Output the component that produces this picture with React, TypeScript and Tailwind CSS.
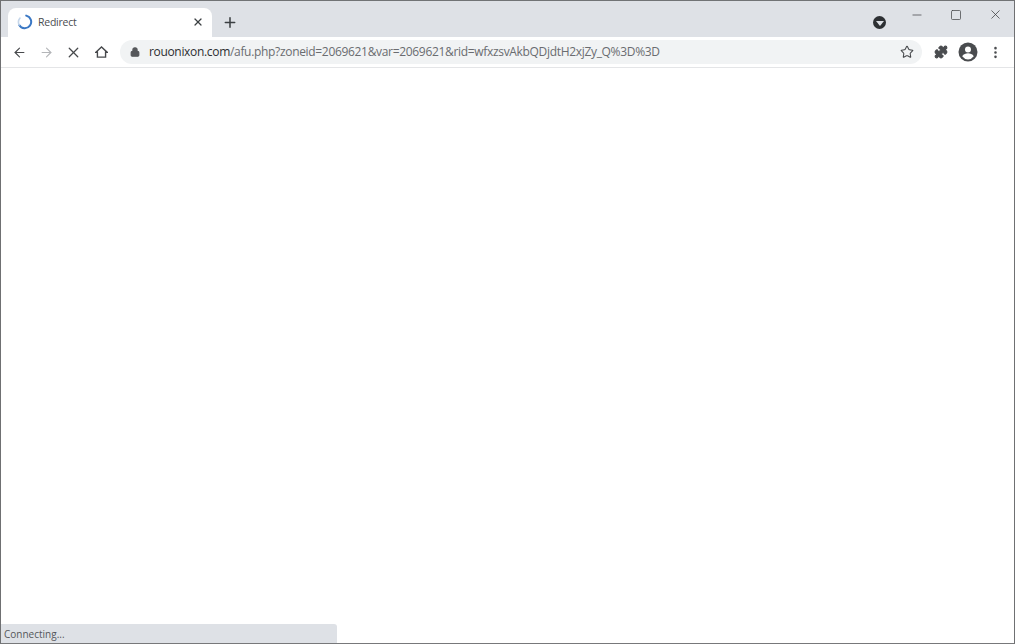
import { ArrowLeft, ArrowRight, Lock, Plus, Star, X, Minus, Square, Puzzle, MoreVertical } from "lucide-react";

export default function App() {
  return (
    <div className="relative flex h-[644px] w-[1015px] flex-col overflow-hidden border-x border-b border-x-[#6f7072] border-b-[#77787a] bg-white font-['Open_Sans','Noto_Sans',sans-serif]">
      <div className="h-px shrink-0 bg-[#717375]" />
      {/* tab strip */}
      <div className="flex h-[36px] shrink-0 items-end bg-[#dee1e6] pl-[7px]">
        <div className="flex h-[29px] w-[204px] items-center rounded-t-[8px] bg-white pb-[1px] pl-[9px] pr-[8px]">
          <svg width="16" height="16" viewBox="0 0 16 16" fill="none" className="shrink-0">
            <path d="M9.2 1.6A6.4 6.4 0 1 1 2.2 11" stroke="#3b78c4" strokeWidth="2" strokeLinecap="round" />
            <path d="M2.2 11A6.4 6.4 0 0 1 3 4" stroke="#c5d6ea" strokeWidth="1.6" strokeLinecap="round" />
          </svg>
          <span className="ml-[5px] flex-1 text-[10.5px] leading-none tracking-[-0.25px] text-[#4a4c4f]">Redirect</span>
          <X size={12} strokeWidth={2.4} className="text-[#3c4043]" />
        </div>
        <div className="ml-[10px] mb-[7px] flex h-[16px] w-[16px] items-center justify-center">
          <Plus size={17} strokeWidth={2.3} className="text-[#3c4043]" />
        </div>
        <div className="flex-1" />
        <div className="mb-[8px] mr-[128px] flex h-[13px] w-[13px] items-center justify-center rounded-full bg-[#2d3033]">
          <div className="mt-[2px] h-0 w-0 border-x-[4px] border-t-[5px] border-x-transparent border-t-[#dee1e6]" />
        </div>
      </div>
      {/* window controls */}
      <div className="absolute right-[11px] top-[7px] flex items-center gap-[26px]">
        <Minus size={14} strokeWidth={1.2} className="text-[#3a3b3d]" />
        <Square size={12} strokeWidth={1.5} className="text-[#45474a]" />
        <X size={15} strokeWidth={1.2} className="text-[#3a3b3d]" />
      </div>
      {/* toolbar */}
      <div className="flex h-[31px] shrink-0 items-center border-b border-[#e4e5e7] bg-white pl-[11px] pr-[11px]">
        <ArrowLeft size={15} strokeWidth={1.8} className="text-[#47494c]" />
        <ArrowRight size={15} strokeWidth={1.8} className="ml-[12px] text-[#b4b6b9]" />
        <X size={17} strokeWidth={1.8} className="ml-[11px] text-[#47494c]" />
        <svg width="13" height="14" viewBox="0 0 14 14" fill="none" className="ml-[13px]">
          <path d="M1 7.2 7 1.6l6 5.600h-1.600v5.300H2.600V7.200z" stroke="#47494c" strokeWidth="1.500" strokeLinejoin="miter" />
        </svg>
        <div className="ml-[12px] flex h-[24px] w-[803px] items-center rounded-full bg-[#f1f3f4] pl-[10px] pr-[8px]">
          <Lock size={10} strokeWidth={3} className="shrink-0 fill-[#56585b] text-[#56585b]" />
          <div className="ml-[9px] flex-1 whitespace-nowrap text-[12px] leading-none tracking-[-0.32px] text-[#6a6c70]">
            <span className="text-[#2c2e31]">rouonixon.com</span>/afu.php?zoneid=2069621&amp;var=2069621&amp;rid=wfxzsvAkbQDjdtH2xjZy_Q%3D%3D
          </div>
          <Star size={14} strokeWidth={1.8} className="shrink-0 text-[#47494c]" />
        </div>
        <Puzzle size={14} strokeWidth={2} className="ml-[12px] fill-[#4a4c4f] text-[#4a4c4f]" />
        <svg width="20" height="20" viewBox="0 0 20 20" className="ml-[10px]">
          <circle cx="10" cy="10" r="9.5" fill="#4a4c4f" />
          <circle cx="10" cy="7.5" r="3" fill="#fff" />
          <path d="M4.2 14.2c1.4-2.2 3.6-3 5.800-3s4.400.8 5.800 3A7.500 7.500 0 0 1 10 17.400a7.500 7.500 0 0 1-5.800-3.200z" fill="#fff" />
        </svg>
        <MoreVertical size={15} strokeWidth={2.2} className="ml-[10px] text-[#4a4c4f]" />
      </div>
      {/* page */}
      <div className="flex-1 bg-white" />
      {/* status bubble */}
      <div className="absolute bottom-0 left-0 flex h-[19px] w-[336px] items-center rounded-tr-[3px] bg-[#dee1e6] pl-[3px] pt-[1px] text-[10px] leading-none text-[#55575a]">
        Connecting...
      </div>
    </div>
  );
}
